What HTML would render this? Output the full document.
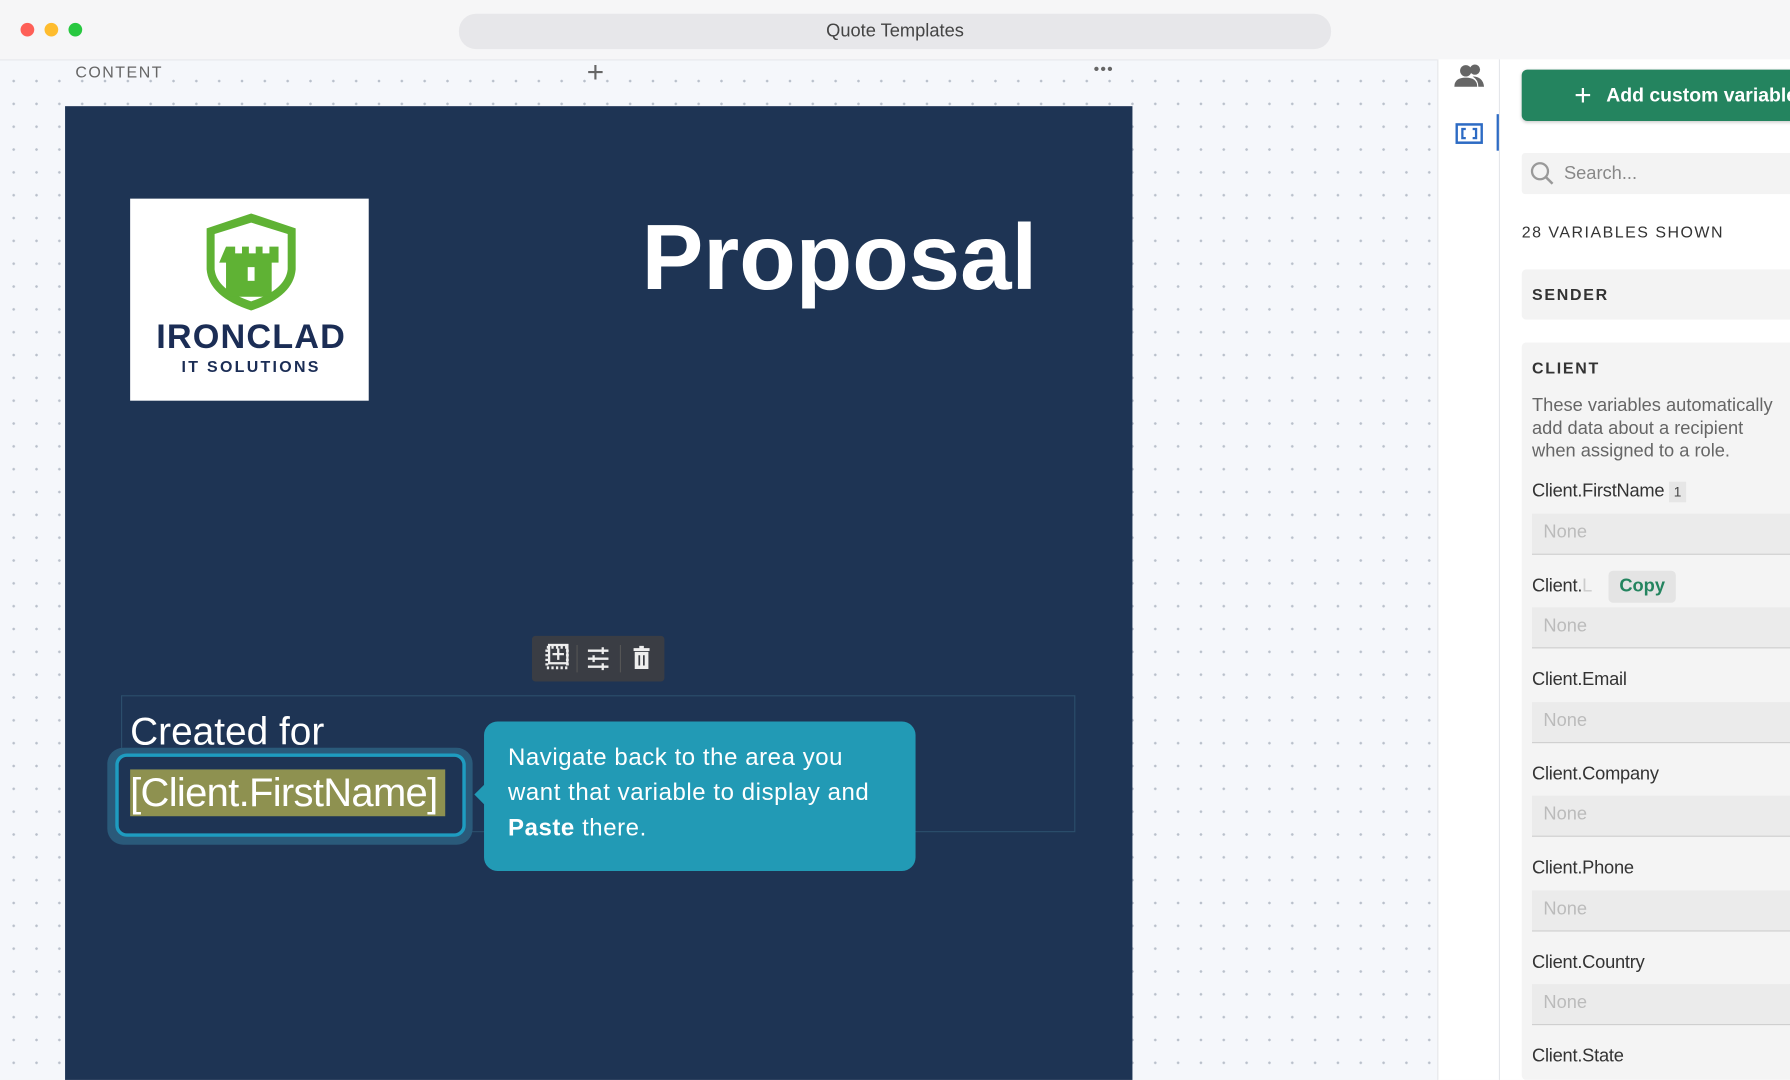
<!DOCTYPE html>
<html><head><meta charset="utf-8"><style>
*{box-sizing:border-box;margin:0;padding:0}
html,body{width:1790px;height:1080px;overflow:hidden;background:#fff}
#w{position:absolute;left:0;top:0;width:1568px;height:946px;transform:scale(1.14158);transform-origin:0 0;font-family:"Liberation Sans",sans-serif;background:#f6f6f7}
.a{position:absolute}
.canvas{left:0;top:52px;width:1259px;height:894px;background-color:#f5f7fb;background-image:radial-gradient(circle,#b9c0cb 1px,transparent 1.3px);background-size:20px 20px;background-position:2px 8px;border-top:1px solid #e6e8ec}
.page{left:57px;top:93px;width:935px;height:853px;background:#1e3454}
.lbl{font-size:16px;color:#333;left:1342px;letter-spacing:-0.2px}
.inp{left:1342px;width:226px;height:36px;background:#ebebeb;border-bottom:1px solid #cfcfcf;color:#bbb;font-size:16px;padding:8px 10px}
</style></head><body><div id="w">
<div class="a" style="left:18px;top:20px;width:12px;height:12px;border-radius:50%;background:#fe5f57"></div>
<div class="a" style="left:39px;top:20px;width:12px;height:12px;border-radius:50%;background:#febc2e"></div>
<div class="a" style="left:60px;top:20px;width:12px;height:12px;border-radius:50%;background:#28c840"></div>
<div class="a" style="left:402px;top:12px;width:764px;height:31px;border-radius:15px;background:#e7e7ea;text-align:center;line-height:31px;font-size:16px;color:#444">Quote Templates</div>
<div class="a canvas"></div>
<div class="a" style="left:66px;top:55px;font-size:14px;letter-spacing:1.3px;color:#666">CONTENT</div>
<div class="a" style="left:514px;top:48px;font-size:26px;color:#666">+</div>
<div class="a" style="left:958px;top:52px;font-size:14px;color:#666;letter-spacing:1px">•••</div>
<div class="a page"></div>
<div class="a" style="left:114px;top:174px;width:209px;height:177px;background:#fff">
<svg width="209" height="177" viewBox="0 0 209 177">
<path d="M106 13 L145 26 L145 62 Q143 86 106 98 Q69 86 67 62 L67 26 Z" fill="#5fb234"/>
<path d="M106 21 L138 31 L138 62 Q136 80 106 90 Q76 80 74 62 L74 31 Z" fill="#fff"/>
<path d="M84 42h8v6h6v-6h6v6h6v-6h6v6h6v-6h8v14h-6v30h-40v-30h-6z" fill="#5fb234"/>
<rect x="103" y="60" width="6" height="12" fill="#fff"/>
<text x="106" y="131" text-anchor="middle" font-family="Liberation Sans" font-weight="bold" font-size="30" letter-spacing="1" fill="#1b2d55">IRONCLAD</text>
<text x="106" y="152" text-anchor="middle" font-family="Liberation Sans" font-weight="bold" font-size="14" letter-spacing="2" fill="#1b2d55">IT SOLUTIONS</text>
</svg></div>
<div class="a" style="left:562px;top:180px;font-size:81px;font-weight:bold;color:#fff">Proposal</div>
<div class="a" style="left:466px;top:557px;width:116px;height:40px;background:#3a3d44;border-radius:3px"></div>
<svg class="a" style="left:466px;top:557px" width="116" height="40" viewBox="0 0 116 40">
<rect x="13" y="10" width="18" height="18" fill="none" stroke="#eee" stroke-width="2.5" stroke-dasharray="2 2"/>
<rect x="15" y="8" width="16" height="16" fill="none" stroke="#eee" stroke-width="2"/>
<path d="M23 11v10M18 16h10" stroke="#eee" stroke-width="2"/>
<line x1="39.5" y1="8" x2="39.5" y2="32" stroke="#555"/><line x1="77.5" y1="8" x2="77.5" y2="32" stroke="#555"/>
<path d="M49 13h18M49 20h18M49 27h18" stroke="#eee" stroke-width="2"/>
<path d="M62 10v6M54 17v6M62 24v6" stroke="#eee" stroke-width="2"/>
<path d="M89 12h14M94 10h4" stroke="#eee" stroke-width="2.5"/>
<path d="M90 14h12v15h-12z" fill="#eee"/><path d="M94 17v9M98 17v9" stroke="#3a3d44" stroke-width="1.5"/>
</svg>
<div class="a" style="left:106px;top:609px;width:836px;height:120px;border:1px solid #2c4e6c"></div>
<div class="a" style="left:114px;top:622px;font-size:34px;color:#fff">Created for</div>
<div class="a" style="left:94px;top:655px;width:320px;height:85px;border-radius:14px;background:#2a5a7a"></div>
<div class="a" style="left:101px;top:660px;width:307px;height:73px;border-radius:10px;border:3px solid #1e9cc0;background:#1e3454"></div>
<div class="a" style="left:114px;top:674px;width:276px;height:41px;background:#8e9150"></div>
<div class="a" style="left:114px;top:675px;font-size:35px;color:#fff;letter-spacing:-0.6px">[Client.FirstName]</div>
<div class="a" style="left:418px;top:690px;width:12px;height:12px;background:#229ab5;transform:rotate(45deg)"></div>
<div class="a" style="left:424px;top:632px;width:378px;height:131px;border-radius:12px;background:#229ab5;color:#fff;font-size:21px;letter-spacing:0.5px;line-height:31px;padding:16px 10px 16px 21px;white-space:nowrap">Navigate back to the area you<br>want that variable to display and<br><b>Paste</b> there.</div>
<div class="a" style="left:1259px;top:52px;width:55px;height:894px;background:#fff;border-left:1px solid #e4e6ea;border-right:1px solid #e4e6ea"></div>
<div class="a" style="left:1314px;top:52px;width:254px;height:894px;background:#fff"></div>
<svg class="a" style="left:1272px;top:54px" width="30" height="26" viewBox="0 0 30 26">
<circle cx="12" cy="8" r="5" fill="#666"/><circle cx="20" cy="7" r="4.5" fill="#666"/>
<path d="M2 22q0-8 10-8t10 8z" fill="#666"/><path d="M18 13q9 0 10 9h-5q0-6-5-9z" fill="#666"/>
</svg>
<svg class="a" style="left:1275px;top:107px" width="24" height="20" viewBox="0 0 24 20">
<rect x="1" y="2" width="22" height="16" fill="none" stroke="#2d6bc4" stroke-width="2.2"/>
<path d="M9 6h-3v8h3M15 6h3v8h-3" fill="none" stroke="#2d6bc4" stroke-width="2"/>
</svg>
<div class="a" style="left:1311px;top:100px;width:2px;height:32px;background:#2d6bc4"></div>
<div class="a" style="left:1333px;top:61px;width:240px;height:45px;border-radius:5px;background:#24845f;color:#fff;font-weight:bold;font-size:17px;line-height:45px;padding-left:46px;white-space:nowrap;box-shadow:0 1px 3px rgba(0,0,0,.2)"><span style="position:absolute;left:46px;top:0px;font-size:26px;font-weight:normal">+</span><span style="margin-left:28px">Add custom variable</span></div>
<div class="a" style="left:1333px;top:134px;width:240px;height:36px;background:#f3f3f3;border-radius:3px;color:#888;font-size:16px;line-height:37px;padding-left:37px">Search...</div>
<svg class="a" style="left:1340px;top:141px" width="24" height="24" viewBox="0 0 24 24"><circle cx="9" cy="9" r="7" fill="none" stroke="#999" stroke-width="2"/><path d="M14 14l6 6" stroke="#999" stroke-width="2.2"/></svg>
<div class="a" style="left:1333px;top:195px;font-size:14px;letter-spacing:1.3px;color:#333">28 VARIABLES SHOWN</div>
<div class="a" style="left:1333px;top:236px;width:240px;height:44px;background:#f3f3f3;border-radius:4px;font-size:14px;font-weight:bold;letter-spacing:1.5px;color:#333;line-height:44px;padding-left:9px">SENDER</div>
<div class="a" style="left:1333px;top:300px;width:240px;height:646px;background:#f4f4f4;border-radius:4px"></div>
<div class="a" style="left:1342px;top:314px;font-size:14px;font-weight:bold;letter-spacing:1.5px;color:#333">CLIENT</div>
<div class="a" style="left:1342px;top:346px;width:230px;font-size:16px;line-height:20px;color:#666;white-space:nowrap">These variables automatically<br>add data about a recipient<br>when assigned to a role.</div>
<div class="a lbl" style="top:422px">Client.FirstName <span style="display:inline-block;font-size:12px;background:#e6e6e6;padding:2px 4px;color:#444">1</span></div>
<div class="a inp" style="top:450px">None</div>
<div class="a lbl" style="top:505px">Client.<span style="color:#ccc">L</span></div>
<div class="a" style="left:1409px;top:500px;width:59px;height:28px;background:#e4e4e4;border-radius:4px;color:#24845f;font-weight:bold;font-size:16px;text-align:center;line-height:28px">Copy</div>
<div class="a inp" style="top:532px">None</div>
<div class="a lbl" style="top:587px">Client.Email</div>
<div class="a inp" style="top:615px">None</div>
<div class="a lbl" style="top:670px">Client.Company</div>
<div class="a inp" style="top:697px">None</div>
<div class="a lbl" style="top:752px">Client.Phone</div>
<div class="a inp" style="top:780px">None</div>
<div class="a lbl" style="top:835px">Client.Country</div>
<div class="a inp" style="top:862px">None</div>
<div class="a lbl" style="top:917px">Client.State</div>
</div></body></html>
